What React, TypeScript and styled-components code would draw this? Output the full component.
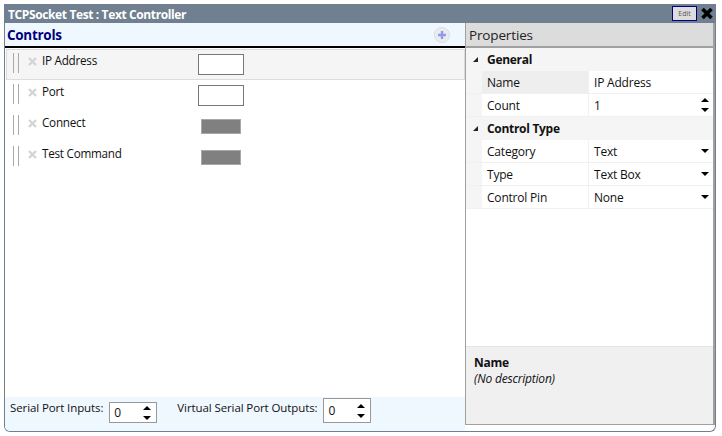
import React from 'react'
import styled, { createGlobalStyle } from 'styled-components'

const GlobalStyle = createGlobalStyle`
  html, body { margin: 0; padding: 0; background: #fff; }
  body { font-family: "Open Sans", "Liberation Sans", sans-serif; font-size: 12px; color: #111; }
`

const Page = styled.div`
  width: 722px;
  height: 436px;
  box-sizing: border-box;
  padding: 4px 6px 4px 4px;
`

const Win = styled.div`
  height: 100%;
  box-sizing: border-box;
  display: flex;
  flex-direction: column;
  border: 1px solid #708090;
  border-top: 0;
  border-radius: 0 0 6px 6px;
  overflow: hidden;
`

const TitleBar = styled.div`
  height: 19px;
  flex: none;
  background: #708090;
  display: flex;
  align-items: center;
  justify-content: flex-end;
  gap: 3px;
  padding: 0 1px 0 3px;
`

const Title = styled.div`
  flex: 1;
  color: #fff;
  font-weight: 700;
  font-size: 12px;
  letter-spacing: -0.38px;
  padding-top: 1px;
`

const EditButton = styled.div`
  width: 25px;
  height: 15px;
  box-sizing: border-box;
  border: 1px solid #000080;
  background: #dddddd;
  color: #555;
  font-size: 7px;
  display: flex;
  align-items: center;
  justify-content: center;
`

const Body = styled.div`
  flex: 1;
  display: flex;
  min-height: 0;
`

const LeftPane = styled.div`
  width: 460px;
  flex: none;
  display: flex;
  flex-direction: column;
`

const ControlsHeader = styled.div`
  height: 23px;
  flex: none;
  background: #f0f8ff;
  border-bottom: 2px solid #000;
  display: flex;
  align-items: center;
  justify-content: space-between;
  padding: 0 15px 0 2px;
  color: #000080;
  font-weight: 700;
  font-size: 13.5px;
  letter-spacing: -0.3px;
`

const AddIcon = styled.div`
  width: 14px;
  height: 14px;
  border-radius: 50%;
  background: #ebebf2;
  border: 1px solid #dcdce4;
  display: flex;
  align-items: center;
  justify-content: center;
`

const ControlList = styled.div`
  flex: 1;
  padding: 1px 0 0 1px;
  display: flex;
  flex-direction: column;
`

const ControlRow = styled.div<{ $selected?: boolean }>`
  height: 31px;
  flex: none;
  box-sizing: border-box;
  display: flex;
  padding-left: 6px;
  background: ${p => (p.$selected ? '#f5f5f5' : 'transparent')};
  border: 1px solid ${p => (p.$selected ? '#dcdcdc' : 'transparent')};
`

const Grip = styled.div`
  width: 6px;
  height: 20px;
  margin-top: 3px;
  box-sizing: border-box;
  border-left: 1px solid #aaa;
  border-right: 1px solid #aaa;
  flex: none;
`

const RemoveIcon = styled.svg`
  width: 9px;
  height: 9px;
  margin: 7px 5px 0 9px;
  flex: none;
`

const ControlName = styled.div`
  width: 149px;
  flex: none;
  font-size: 11.7px;
  letter-spacing: -0.25px;
  line-height: 16px;
  margin-top: 2px;
`

const Preview = styled.div`
  width: 60px;
  display: flex;
  justify-content: center;
  padding-top: 4px;
`

const TextPreview = styled.div`
  width: 46px;
  height: 21px;
  box-sizing: border-box;
  background: #fff;
  border: 1px solid #777;
`

const ButtonPreview = styled.div`
  width: 40px;
  height: 15px;
  margin-top: 3px;
  box-sizing: border-box;
  background: #808080;
  border: 1px solid #a8a8a8;
`

const Footer = styled.div`
  height: 34px;
  flex: none;
  background: #f0f8ff;
  display: flex;
  align-items: flex-start;
  padding: 0 0 0 5px;
  font-size: 11.5px;
  letter-spacing: -0.1px;
`

const FooterLabel = styled.span`
  margin-right: 6px;
  margin-top: 3px;
  line-height: 16px;
`

const Spinner = styled.div<{ $gap: number; $top: number; $height: number }>`
  width: 48px;
  height: ${p => p.$height}px;
  margin-top: ${p => p.$top}px;
  box-sizing: border-box;
  border: 1px solid #999;
  background: #fff;
  display: flex;
  align-items: center;
  justify-content: space-between;
  padding: 0 5px 0 4px;
  margin-right: ${p => p.$gap}px;
  font-size: 12px;
`

const ArrowStack = styled.span`
  display: flex;
  flex-direction: column;
  gap: 6px;
`

const Tri = styled.span<{ $dir: 'up' | 'down' }>`
  display: block;
  width: 0;
  height: 0;
  border-left: 4px solid transparent;
  border-right: 4px solid transparent;
  ${p => (p.$dir === 'up' ? 'border-bottom' : 'border-top')}: 4px solid #000;
`

const PropsPane = styled.div`
  flex: 1;
  min-width: 0;
  display: flex;
  flex-direction: column;
  margin-bottom: 6px;
  border-left: 1px solid #a0a0a0;
  border-right: 2px solid #a0a0a0;
  border-bottom: 1px solid #a0a0a0;
`

const PropsHeader = styled.div`
  height: 23px;
  flex: none;
  background: #dcdcdc;
  border-bottom: 2px solid #a0a0a0;
  display: flex;
  align-items: center;
  padding-left: 3px;
  font-size: 13.5px;
  letter-spacing: -0.15px;
  color: #222;
`

const Grid = styled.div`
  flex: 1;
  background: #fff;
`

const Section = styled.div`
  height: 23px;
  background: #f5f5f5;
  display: flex;
  align-items: center;
  font-weight: 700;
  font-size: 12px;
  letter-spacing: -0.3px;
`

const Caret = styled.span`
  width: 0;
  height: 0;
  margin: 0 9px 0 7px;
  border-left: 5px solid transparent;
  border-bottom: 5px solid #222;
  flex: none;
`

const Row = styled.div`
  height: 23px;
  box-sizing: border-box;
  display: flex;
  border-bottom: 1px solid #f0f0f0;
`

const Gutter = styled.div`
  width: 16px;
  flex: none;
  background: #f5f5f5;
`

const RowName = styled.div<{ $active?: boolean }>`
  width: 107px;
  flex: none;
  box-sizing: border-box;
  padding-left: 5px;
  display: flex;
  align-items: center;
  border-right: 1px solid #f0f0f0;
  background: ${p => (p.$active ? '#eeeeee' : '#fff')};
  letter-spacing: -0.2px;
`

const RowValue = styled.div`
  flex: 1;
  display: flex;
  align-items: center;
  justify-content: space-between;
  padding: 0 4px 0 5px;
  letter-spacing: -0.2px;
`

const Description = styled.div`
  height: 78px;
  flex: none;
  box-sizing: border-box;
  background: #f0f0f0;
  border-top: 1px solid #e4e4e4;
  padding: 8px 0 0 8px;
  line-height: 16px;
`

const DescName = styled.div`
  font-weight: 700;
  letter-spacing: -0.3px;
`

const DescText = styled.div`
  font-style: italic;
  letter-spacing: -0.2px;
`

const Remove = () => (
  <RemoveIcon viewBox="0 0 9 9">
    <path d="M1 1 L8 8 M8 1 L1 8" stroke="#d4d4d4" strokeWidth="2.4" />
  </RemoveIcon>
)

const UpDown = () => (
  <ArrowStack>
    <Tri $dir="up" />
    <Tri $dir="down" />
  </ArrowStack>
)

const controls = [
  { name: 'IP Address', kind: 'text', selected: true },
  { name: 'Port', kind: 'text' },
  { name: 'Connect', kind: 'button' },
  { name: 'Test Command', kind: 'button' },
]

const App = () => (
  <>
    <GlobalStyle />
    <Page>
      <Win>
        <TitleBar>
          <Title>TCPSocket Test : Text Controller</Title>
          <EditButton>Edit</EditButton>
          <svg width="14" height="13" viewBox="0 0 14 13">
            <path d="M2.5 2 L11.5 11 M11.5 2 L2.5 11" stroke="#000" strokeWidth="3.6" />
          </svg>
        </TitleBar>
        <Body>
          <LeftPane>
            <ControlsHeader>
              Controls
              <AddIcon>
                <svg width="10" height="10" viewBox="0 0 10 10">
                  <path d="M5 1 V9 M1 5 H9" stroke="#8f9ae8" strokeWidth="2.4" />
                </svg>
              </AddIcon>
            </ControlsHeader>
            <ControlList>
              {controls.map(c => (
                <ControlRow key={c.name} $selected={c.selected}>
                  <Grip />
                  <Remove />
                  <ControlName>{c.name}</ControlName>
                  <Preview>{c.kind === 'text' ? <TextPreview /> : <ButtonPreview />}</Preview>
                </ControlRow>
              ))}
            </ControlList>
            <Footer>
              <FooterLabel>Serial Port Inputs:</FooterLabel>
              <Spinner $gap={20} $top={5} $height={21}>
                0
                <UpDown />
              </Spinner>
              <FooterLabel>Virtual Serial Port Outputs:</FooterLabel>
              <Spinner $gap={0} $top={1} $height={25}>
                0
                <UpDown />
              </Spinner>
            </Footer>
          </LeftPane>
          <PropsPane>
            <PropsHeader>Properties</PropsHeader>
            <Grid>
              <Section><Caret />General</Section>
              <Row>
                <Gutter />
                <RowName $active>Name</RowName>
                <RowValue>IP Address</RowValue>
              </Row>
              <Row>
                <Gutter />
                <RowName>Count</RowName>
                <RowValue>
                  1
                  <UpDown />
                </RowValue>
              </Row>
              <Section><Caret />Control Type</Section>
              <Row>
                <Gutter />
                <RowName>Category</RowName>
                <RowValue>Text<Tri $dir="down" /></RowValue>
              </Row>
              <Row>
                <Gutter />
                <RowName>Type</RowName>
                <RowValue>Text Box<Tri $dir="down" /></RowValue>
              </Row>
              <Row>
                <Gutter />
                <RowName>Control Pin</RowName>
                <RowValue>None<Tri $dir="down" /></RowValue>
              </Row>
            </Grid>
            <Description>
              <DescName>Name</DescName>
              <DescText>(No description)</DescText>
            </Description>
          </PropsPane>
        </Body>
      </Win>
    </Page>
  </>
)

export default App
